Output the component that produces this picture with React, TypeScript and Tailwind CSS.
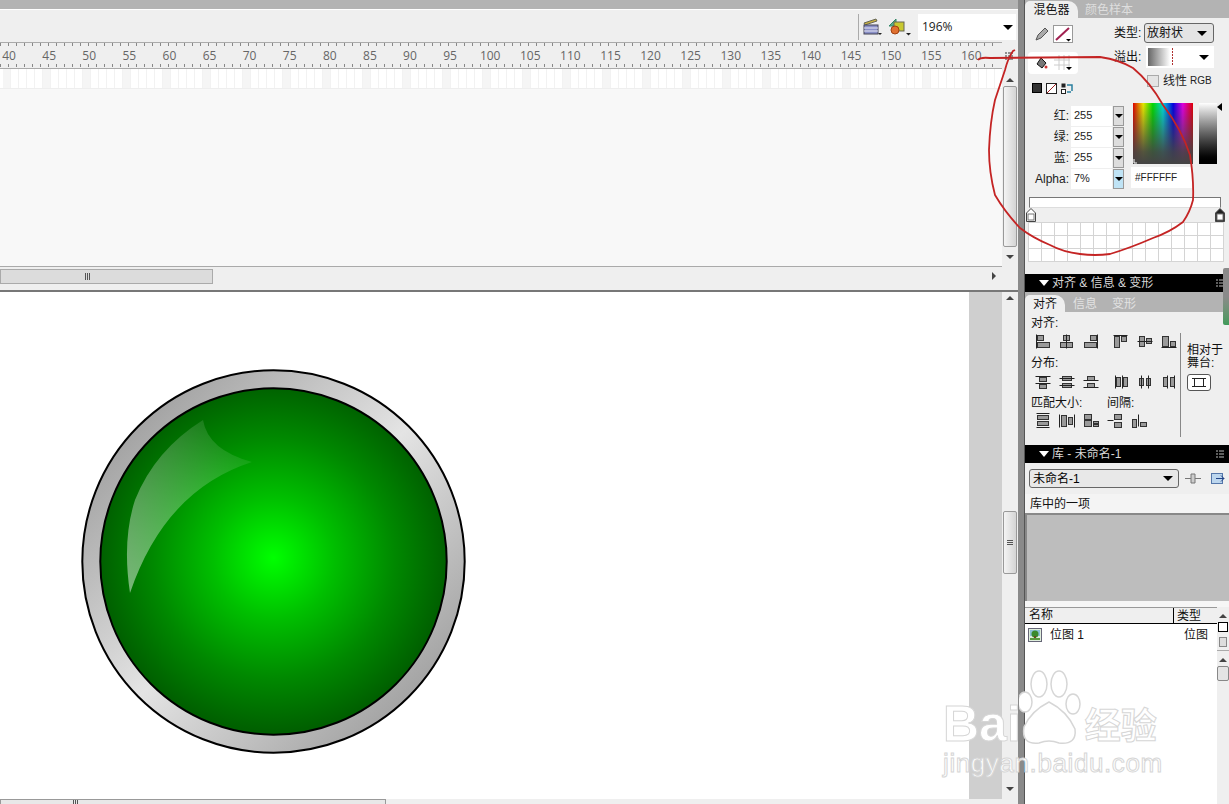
const frameLabels = Array.from({ length: 25 }, (_, i) => 40 + i * 5);
const ticks = Array.from({ length: 125 }, (_, i) => i);

type Glyph = { l?: number[][]; r?: number[][] };

const alignRow1: Glyph[] = [
  { l: [[1, 0, 1, 14]], r: [[2, 1, 6, 5], [2, 8, 12, 5]] },
  { l: [[7, 0, 7, 14]], r: [[4, 1, 6, 5], [1, 8, 12, 5]] },
  { l: [[14, 0, 14, 14]], r: [[7, 1, 6, 5], [1, 8, 12, 5]] },
  { l: [[0, 1, 14, 1]], r: [[1, 2, 5, 11], [8, 2, 5, 5]] },
  { l: [[0, 7, 15, 7]], r: [[2, 2, 5, 10], [9, 4, 5, 5]] },
  { l: [[0, 13, 15, 13]], r: [[1, 2, 6, 10], [9, 7, 5, 5]] },
];
const alignRow2: Glyph[] = [
  { l: [[0, 2, 15, 2], [0, 9, 15, 9]], r: [[4, 3, 7, 4], [4, 10, 7, 4]] },
  { l: [[0, 4, 15, 4], [0, 11, 15, 11]], r: [[3, 2, 9, 4], [3, 9, 9, 4]] },
  { l: [[0, 6, 15, 6], [0, 13, 15, 13]], r: [[4, 2, 7, 4], [4, 9, 7, 4]] },
  { l: [[2, 1, 2, 14], [9, 1, 9, 14]], r: [[3, 3, 4, 9], [10, 3, 4, 9]] },
  { l: [[4, 1, 4, 14], [11, 1, 11, 14]], r: [[2, 4, 4, 7], [9, 4, 4, 7]] },
  { l: [[6, 1, 6, 14], [13, 1, 13, 14]], r: [[2, 3, 4, 9], [9, 3, 4, 9]] },
];
const alignRow3: Glyph[] = [
  { l: [[1, 0, 14, 0], [1, 14, 14, 14]], r: [[2, 2, 11, 4], [2, 8, 11, 4]] },
  { l: [[0, 1, 0, 14], [15, 1, 15, 14]], r: [[2, 2, 5, 11], [9, 4, 4, 7]] },
  { r: [[1, 1, 7, 5], [1, 7, 7, 6], [10, 8, 5, 2], [10, 11, 5, 2]] },
  { l: [[0, 7, 6, 7]], r: [[7, 1, 7, 5], [7, 9, 7, 5]] },
  { l: [[7, 1, 7, 13]], r: [[1, 6, 4, 8], [9, 9, 6, 4]] },
];

const AlignIcon = ({ glyph }: { glyph: Glyph }) => {
  return (
    <svg width="16" height="15" viewBox="0 0 16 15" className="shrink-0">
      {glyph.r?.map((r, i) => (
        <rect key={i} x={r[0] + 0.5} y={r[1] + 0.5} width={r[2]} height={r[3]} fill="#9a9a9a" stroke="#333" />
      ))}
      {glyph.l?.map((l, i) => (
        <line key={i} x1={l[0] + 0.5} y1={l[1] + 0.5} x2={l[2] + 0.5} y2={l[3] + 0.5} stroke="#222" />
      ))}
    </svg>
  );
};

const Caret = ({ className = "" }: { className?: string }) => {
  return <div className={`h-0 w-0 border-x-[5px] border-t-[5px] border-x-transparent border-t-black ${className}`} />;
};

const ArrowUp = () => {
  return <div className="h-0 w-0 border-x-[4px] border-b-[4px] border-x-transparent border-b-[#444]" />;
};

const ArrowDown = () => {
  return <div className="h-0 w-0 border-x-[4px] border-t-[4px] border-x-transparent border-t-[#444]" />;
};

const Grip = () => {
  return (
    <div className="flex h-[7px] gap-[1px]">
      <div className="w-px bg-[#555]" />
      <div className="w-px bg-[#555]" />
      <div className="w-px bg-[#555]" />
    </div>
  );
};

const GradientStop = ({ fill }: { fill: string }) => {
  return (
    <svg width="10" height="14" viewBox="0 0 10 14">
      <path d="M5 .5L9.500 5v8.500H.5V5z" fill={fill} stroke="#444" />
      <rect x="2" y="6" width="6" height="6" fill="#fff" stroke="#777" />
    </svg>
  );
};

const PanelTitle = ({ title }: { title: string }) => {
  return (
    <div className="flex h-[18px] shrink-0 items-center bg-black pl-[14px] pr-1 text-[12px] leading-none text-[#d8d8d8]">
      <div className="h-0 w-0 border-x-[5px] border-t-[6px] border-x-transparent border-t-white" />
      <span className="ml-[3px]">{title}</span>
      <svg width="10" height="10" viewBox="0 0 10 10" className="ml-auto">
        <path d="M1 2h2M1 5h2M1 8h2M4 2h5M4 5h5M4 8h5" stroke="#bbb" />
      </svg>
    </div>
  );
};

const ColorField = ({ label, value, active }: { label: string; value: string; active?: boolean }) => {
  return (
    <div className="flex h-[21px] w-[99px] items-center">
      <span className="w-[46px] shrink-0 pr-[2px] text-right text-[12px] text-[#222]">{label}</span>
      <div className="flex h-[20px] w-[41px] shrink-0 items-center bg-white pl-[3px] text-[11px] text-[#222]">{value}</div>
      <div className={`ml-[1px] flex h-[20px] w-[11px] shrink-0 items-center justify-center border border-[#999] ${active ? "bg-[#bfe3f5]" : "bg-[#ddd]"}`}>
        <div className="h-0 w-0 border-x-[4px] border-t-[4px] border-x-transparent border-t-black" />
      </div>
    </div>
  );
};

const MixerPanel = () => {
  return (
    <div className="h-[274px] shrink-0 bg-[#efefef]">
      <div className="flex h-[18px] items-end bg-[#b3b3b3] text-[12px] leading-none">
        <div className="flex h-[17px] w-[53px] items-center justify-center rounded-tl-[5px] rounded-tr-[10px] bg-[#efefef] text-[#111]">混色器</div>
        <span className="mb-[2px] ml-[7px] text-[#dedede]">颜色样本</span>
      </div>
      <div className="flex">
        <div className="w-[81px] shrink-0">
          <div className="ml-[10px] mt-[7px] flex items-center gap-[4px]">
            <svg width="14" height="14" viewBox="0 0 14 14">
              <path d="M1 13l2-5 7-7 3 3-7 7z" fill="#aaa" stroke="#555" />
            </svg>
            <svg width="20" height="18" viewBox="0 0 20 18">
              <rect x="0.5" y="0.5" width="19" height="17" fill="#fff" stroke="#999" />
              <path d="M3 15L16 3" stroke="#a02050" strokeWidth="2" />
              <path d="M13 14h5l-2.500 2.500z" fill="#000" />
            </svg>
          </div>
          <div className="ml-[3px] mt-[9px] flex h-[22px] w-[50px] items-center rounded-[4px] bg-white pl-[8px]">
            <svg width="12" height="13" viewBox="0 0 12 13">
              <path d="M5 1l5 5-4 5-5-4z" fill="#777" stroke="#111" />
              <circle cx="10" cy="10" r="1.500" fill="#c33" />
            </svg>
            <svg width="20" height="16" viewBox="0 0 20 16" className="ml-[6px]">
              <path d="M0 5h16M0 10h16M5 0v15M10 0v15M15 0v15" stroke="#ccc" />
              <path d="M12 12h6l-3 3z" fill="#000" />
            </svg>
          </div>
          <div className="ml-[7px] mt-[9px] flex gap-[4px]">
            <div className="h-[10px] w-[10px] border border-black bg-[#333]" />
            <svg width="11" height="11" viewBox="0 0 11 11">
              <rect x="0.5" y="0.5" width="10" height="10" fill="#fff" stroke="#222" />
              <path d="M1 10L10 1" stroke="#a02020" />
            </svg>
            <svg width="12" height="11" viewBox="0 0 12 11">
              <rect x="0.5" y="0.5" width="4" height="4" fill="#222" />
              <rect x="0.5" y="6.500" width="4" height="4" fill="#fff" stroke="#222" />
              <path d="M6 2h5v6M6 9h4" fill="none" stroke="#2a7f9f" strokeWidth="1.500" />
            </svg>
          </div>
          <div className="mt-[11px]">
            <ColorField label="红:" value="255" />
            <ColorField label="绿:" value="255" />
            <ColorField label="蓝:" value="255" />
            <ColorField label="Alpha:" value="7%" active />
          </div>
        </div>
        <div className="w-[123px]">
          <div className="ml-[8px] mt-[5px] flex items-center text-[12px] leading-none">
            <span className="w-[30px] shrink-0 text-[#111]">类型:</span>
            <div className="flex h-[20px] w-[70px] items-center justify-between rounded-[3px] border border-[#666] bg-[#e4e4e4] pl-[2px] pr-[6px] text-[#111]">
              放射状
              <Caret />
            </div>
          </div>
          <div className="ml-[8px] mt-[3px] flex items-center text-[12px] leading-none">
            <span className="w-[32px] shrink-0 text-[#111]">溢出:</span>
            <div className="flex h-[22px] w-[68px] items-center justify-between bg-white pl-[2px] pr-[5px]">
              <svg width="26" height="18" viewBox="0 0 26 18">
                <defs>
                  <linearGradient id="overflowGrad">
                    <stop offset="0" stopColor="#666" />
                    <stop offset="1" stopColor="#fff" />
                  </linearGradient>
                </defs>
                <rect width="22" height="18" fill="url(#overflowGrad)" />
                <path d="M24.500 0v18" stroke="#b03030" strokeDasharray="2 1" />
              </svg>
              <Caret />
            </div>
          </div>
          <div className="ml-[41px] mt-[7px] flex items-center text-[12px] leading-none text-[#222]">
            <div className="h-[12px] w-[12px] border border-[#aaa] bg-[#e4e4e4]" />
            <span className="ml-[4px]">线性</span>
            <span className="ml-[3px] text-[10px]">RGB</span>
          </div>
          <div className="ml-[27px] mt-[16px] flex items-start">
            <svg width="60" height="61" viewBox="0 0 60 61" className="shrink-0">
              <defs>
                <linearGradient id="hue">
                  <stop offset="0" stopColor="#e00000" />
                  <stop offset="0.17" stopColor="#e8e800" />
                  <stop offset="0.33" stopColor="#00d800" />
                  <stop offset="0.5" stopColor="#00d8d8" />
                  <stop offset="0.67" stopColor="#0000e0" />
                  <stop offset="0.83" stopColor="#e000e0" />
                  <stop offset="1" stopColor="#e00000" />
                </linearGradient>
                <linearGradient id="hueShade" x1="0" y1="0" x2="0" y2="1">
                  <stop offset="0" stopColor="#444" stopOpacity="0" />
                  <stop offset="0.8" stopColor="#444" stopOpacity="0.9" />
                  <stop offset="1" stopColor="#444" stopOpacity="1" />
                </linearGradient>
              </defs>
              <rect width="60" height="61" fill="url(#hue)" />
              <rect width="60" height="61" fill="url(#hueShade)" />
              <path d="M1 60v-4M1 60h3" stroke="#fff" />
            </svg>
            <div className="ml-[6px] h-[61px] w-[18px] shrink-0 bg-linear-to-b from-white to-black" />
            <div className="h-0 w-0 shrink-0 border-y-[4px] border-r-[5px] border-y-transparent border-r-black" />
          </div>
          <div className="ml-[25px] mt-[3px] flex h-[21px] w-[61px] items-center bg-white pl-[4px] text-[10px] text-[#222]">#FFFFFF</div>
        </div>
      </div>
      <div className="ml-[4px] mt-[8px] h-[11px] w-[192px] border border-[#777] border-b-[#ddd] bg-white" />
      <div className="ml-[1px] flex w-[199px] justify-between">
        <GradientStop fill="#fff" />
        <GradientStop fill="#222" />
      </div>
      <div className="ml-[3px] h-[40px] w-[196px] bg-white bg-[linear-gradient(#d4d4d4_1px,transparent_1px),linear-gradient(90deg,#d4d4d4_1px,transparent_1px)] bg-[size:13px_13px]" />
    </div>
  );
};

const AlignPanel = () => {
  return (
    <div className="h-[171px] shrink-0">
      <PanelTitle title="对齐 & 信息 & 变形" />
      <div className="flex h-[20px] items-end bg-[#b3b3b3] text-[12px] leading-none">
        <div className="flex h-[17px] w-[40px] items-center justify-center rounded-tl-[5px] rounded-tr-[10px] bg-[#efefef] text-[#111]">对齐</div>
        <span className="mb-[2px] ml-[8px] text-[#e2e2e2]">信息</span>
        <span className="mb-[2px] ml-[15px] text-[#e2e2e2]">变形</span>
      </div>
      <div className="flex h-[133px] bg-[#efefef] text-[12px] leading-none text-[#111]">
        <div className="w-[155px] shrink-0 pl-[6px] pt-[5px]">
          <div>对齐:</div>
          <div className="ml-[4px] mt-[5px] flex gap-[8px]">
            {alignRow1.map((g, i) => (
              <div key={i} className={i === 3 ? "ml-[6px]" : ""}>
                <AlignIcon glyph={g} />
              </div>
            ))}
          </div>
          <div className="mt-[8px]">分布:</div>
          <div className="ml-[4px] mt-[5px] flex gap-[8px]">
            {alignRow2.map((g, i) => (
              <div key={i} className={i === 3 ? "ml-[6px]" : ""}>
                <AlignIcon glyph={g} />
              </div>
            ))}
          </div>
          <div className="mt-[8px] flex">
            <span className="w-[76px]">匹配大小:</span>
            <span>间隔:</span>
          </div>
          <div className="ml-[4px] mt-[4px] flex gap-[8px]">
            {alignRow3.map((g, i) => (
              <AlignIcon key={i} glyph={g} />
            ))}
          </div>
        </div>
        <div className="mt-[21px] h-[104px] w-px bg-[#888]" />
        <div className="pl-[6px] pt-[32px] leading-[13px]">
          <div>相对于</div>
          <div>舞台:</div>
          <div className="mt-[4px] flex h-[17px] w-[24px] items-center justify-center rounded-[3px] border border-[#555] bg-white">
            <svg width="14" height="11" viewBox="0 0 14 11">
              <rect x="2.500" y="1.500" width="9" height="8" fill="none" stroke="#222" />
              <path d="M0 1.500h4M10 1.500h4M0 9.500h4M10 9.500h4" stroke="#222" />
            </svg>
          </div>
        </div>
      </div>
    </div>
  );
};

const LibraryPanel = () => {
  return (
    <div className="flex flex-1 flex-col overflow-hidden">
      <PanelTitle title="库 - 未命名-1" />
      <div className="flex h-[31px] shrink-0 items-center bg-[#efefef] pl-[4px] text-[12px] leading-none">
        <div className="flex h-[19px] w-[150px] items-center justify-between rounded-[3px] border border-[#666] bg-[#e8e8e8] pl-[3px] pr-[5px]">
          未命名-1
          <Caret />
        </div>
        <svg width="16" height="13" viewBox="0 0 16 13" className="ml-[6px]">
          <path d="M0 6.500h6M10 6.500h6M6 2h4v9H6z" fill="#ccc" stroke="#777" />
        </svg>
        <svg width="15" height="13" viewBox="0 0 15 13" className="ml-[10px]">
          <rect x="0.500" y="1.500" width="11" height="10" fill="#bcd6ee" stroke="#5577aa" />
          <path d="M5 6.500h8M10 3.500l3 3-3 3" fill="none" stroke="#224488" />
        </svg>
      </div>
      <div className="flex h-[19px] shrink-0 items-center bg-[#f4f4f4] pl-[5px] text-[12px] leading-none text-[#111]">库中的一项</div>
      <div className="h-[88px] shrink-0 border-l-2 border-t-2 border-[#888] bg-[#bdbdbd]" />
      <div className="h-[6px] shrink-0 bg-[#f6f6f6]" />
      <div className="flex flex-1">
        <div className="w-[192px] shrink-0 bg-white text-[12px] leading-none text-[#111]">
          <div className="flex h-[17px] items-center border-b border-t border-b-black border-t-[#999] bg-[#efefef]">
            <span className="w-[149px] border-r border-black pl-[4px] leading-[15px]">名称</span>
            <span className="pl-[3px]">类型</span>
          </div>
          <div className="mt-[3px] flex h-[16px] items-center pl-[3px]">
            <svg width="14" height="14" viewBox="0 0 14 14">
              <rect x="0.500" y="0.500" width="13" height="13" fill="#dfeedd" stroke="#667" />
              <rect x="2" y="2" width="10" height="6" fill="#8cc0d8" />
              <circle cx="7" cy="6" r="3.500" fill="#3b8a2e" />
              <rect x="6" y="8" width="2" height="3" fill="#6b4a20" />
              <rect x="2" y="10" width="10" height="2" fill="#5a9a40" />
            </svg>
            <span className="ml-[8px]">位图 1</span>
            <span className="ml-auto pr-[9px]">位图</span>
          </div>
        </div>
        <div className="flex flex-1 flex-col items-center bg-[#efefef]">
          <div className="mt-[7px]">
            <ArrowUp />
          </div>
          <div className="mt-[4px] h-[10px] w-[10px] border border-black bg-white" />
          <div className="mt-[5px] h-[10px] w-[8px] border border-[#888] bg-[#ddd]" />
          <div className="mt-[3px] h-px w-full bg-[#aaa]" />
          <div className="mt-[7px]">
            <ArrowUp />
          </div>
          <div className="mt-[4px] h-[15px] w-full rounded-[2px] border border-[#888] bg-[#e4e4e4]" />
        </div>
      </div>
    </div>
  );
};

const Ruler = () => {
  return (
    <div className="h-[27px] shrink-0 overflow-hidden border-y border-[#aaa] bg-[#efefef]">
      <div className="flex h-[4px]">
        {ticks.map((t) => (
          <div key={t} className="h-[3px] w-[8px] shrink-0 border-l border-[#888]" />
        ))}
      </div>
      <div className="-ml-[11px] flex h-[17px] items-center">
        {frameLabels.map((n) => (
          <div key={n} className="w-[40.1px] shrink-0 text-center text-[12px] leading-none text-[#666]">
            {n}
          </div>
        ))}
      </div>
      <div className="flex h-[4px]">
        {ticks.map((t) => (
          <div key={t} className="h-[3px] w-[8px] shrink-0 border-l border-[#888]" />
        ))}
      </div>
    </div>
  );
};

const Timeline = () => {
  return (
    <div className="flex h-[290px] shrink-0 flex-col bg-[#efefef]">
      <div className="h-[10px] shrink-0 border-b border-white bg-[#b3b3b3]" />
      <div className="flex h-[32px] shrink-0 items-center justify-end pr-[2px] pt-[2px]">
        <div className="h-[26px] w-px bg-[#aaa]" />
        <svg width="19" height="18" viewBox="0 0 19 18" className="ml-[4px]">
          <path d="M1 5L13 1l1 2L2 7z" fill="#c8b040" stroke="#665" />
          <rect x="1" y="7" width="14" height="9" fill="#8a90c8" stroke="#445" />
          <path d="M1 10h14M1 13h14" stroke="#e8e8f4" />
          <path d="M15 15h4l-2 2z" fill="#222" />
        </svg>
        <svg width="24" height="18" viewBox="0 0 24 18" className="ml-[6px]">
          <path d="M1 8L8 1v7z" fill="#58b090" stroke="#386" />
          <rect x="6" y="4" width="10" height="9" fill="#c8c830" stroke="#665" />
          <circle cx="7" cy="12" r="4" fill="#e07030" stroke="#a04010" />
          <path d="M18 15h5l-2.500 2.500z" fill="#222" />
        </svg>
        <div className="ml-[6px] flex h-[26px] w-[98px] items-center justify-between bg-white pl-[4px] pr-[3px] text-[12px] text-[#222]">
          196%
          <Caret />
        </div>
      </div>
      <div className="flex flex-1">
        <div className="flex w-[1002px] shrink-0 flex-col overflow-hidden pb-[5px]">
          <Ruler />
          <div className="flex h-[20px] shrink-0 border-b border-[#eee] bg-white pl-[3px]">
            {ticks.map((t) => (
              <div key={t} className={`h-full w-[8px] shrink-0 border-r border-[#f2f2f2] ${t % 5 === 0 ? "bg-[#f5f5f5]" : "bg-white"}`} />
            ))}
          </div>
          <div className="flex-1 border-b border-[#aaa] bg-[#f8f8f8]" />
          <div className="flex h-[18px] shrink-0 items-center bg-[#efefef]">
            <div className="flex h-[15px] w-[213px] items-center border border-[#aaa] bg-[#dcdcdc] pl-[84px]">
              <Grip />
            </div>
            <div className="ml-auto mr-[6px] h-0 w-0 border-y-[4px] border-l-[4px] border-y-transparent border-l-[#444]" />
          </div>
        </div>
        <div className="flex flex-1 flex-col items-center">
          <svg width="12" height="10" viewBox="0 0 12 10" className="mt-[9px]">
            <path d="M1 2h2M1 5h2M1 8h2M4 2h5M4 5h5M4 8h5" stroke="#333" />
          </svg>
          <div className="mt-[17px]">
            <ArrowUp />
          </div>
          <div className="mt-[4px] h-[161px] w-[14px] rounded-[2px] border border-[#999] bg-linear-to-r from-[#f4f4f4] to-[#d4d4d4]" />
          <div className="mt-[8px]">
            <ArrowDown />
          </div>
        </div>
      </div>
    </div>
  );
};

const Stage = () => {
  return (
    <div className="flex flex-1 flex-col border-t-2 border-[#777] bg-white">
      <div className="flex flex-1">
        <div className="w-[969px] shrink-0 pl-[81px] pt-[77px]">
          <svg width="386" height="386" viewBox="0 0 386 386">
            <defs>
              <linearGradient id="ringGrad" x1="0.1" y1="0.1" x2="0.9" y2="0.9">
                <stop offset="0" stopColor="#9c9c9c" />
                <stop offset="0.5" stopColor="#e4e4e4" />
                <stop offset="1" stopColor="#9c9c9c" />
              </linearGradient>
              <radialGradient id="greenGrad" cx="0.5" cy="0.49" r="0.5">
                <stop offset="0" stopColor="#00ff00" />
                <stop offset="0.35" stopColor="#00bf00" />
                <stop offset="0.7" stopColor="#008800" />
                <stop offset="1" stopColor="#006000" />
              </radialGradient>
              <linearGradient id="shineGrad" x1="0" y1="1" x2="1" y2="0">
                <stop offset="0" stopColor="#fff" stopOpacity="0.48" />
                <stop offset="1" stopColor="#fff" stopOpacity="0.02" />
              </linearGradient>
            </defs>
            <circle cx="192.500" cy="192.500" r="191.200" fill="url(#ringGrad)" stroke="#000" strokeWidth="2" />
            <circle cx="192.500" cy="192.500" r="173.200" fill="url(#greenGrad)" stroke="#000" strokeWidth="2" />
            <path d="M122 51Q127 81 171 93Q84 121 49 224Q41 171 54 131Q74 81 122 51Z" fill="url(#shineGrad)" />
          </svg>
        </div>
        <div className="w-[33px] shrink-0 bg-[#cfcfcf]" />
        <div className="flex flex-1 flex-col items-center bg-[#efefef]">
          <div className="mt-[4px]">
            <ArrowUp />
          </div>
          <div className="mt-[211px] flex h-[63px] w-[14px] flex-col items-center justify-center gap-[1px] rounded-[2px] border border-[#999] bg-linear-to-r from-[#f4f4f4] to-[#d4d4d4]">
            <div className="h-px w-[6px] bg-[#555]" />
            <div className="h-px w-[6px] bg-[#555]" />
            <div className="h-px w-[6px] bg-[#555]" />
          </div>
          <div className="mt-[213px]">
            <ArrowDown />
          </div>
        </div>
      </div>
      <div className="flex h-[5px] shrink-0 bg-[#efefef]">
        <div className="h-[6px] w-[386px] border border-[#999] bg-[#e8e8e8] pl-[72px]">
          <Grip />
        </div>
      </div>
    </div>
  );
};

const Annotation = () => {
  return (
    <svg width="1229" height="804" viewBox="0 0 1229 804" className="pointer-events-none absolute left-0 top-0">
      <path
        d="M978 60Q980 57 990 58L1100 57Q1120 60 1133 68Q1150 82 1163 105Q1182 130 1190 155Q1194 180 1193 200Q1190 212 1183 222Q1170 232 1153 238Q1130 248 1110 254Q1095 256 1080 254Q1063 252 1050 245Q1033 238 1020 228Q1005 212 995 195Q989 172 989 150Q990 122 995 100Q1000 85 1005 70Q1008 58 1013 51L1015 50"
        fill="none"
        stroke="#c42424"
        strokeWidth="1.800"
      />
    </svg>
  );
};

const Watermark = () => {
  return (
    <div className="pointer-events-none absolute bottom-[28px] right-[66px] flex w-[220px] flex-col font-['Liberation_Sans',sans-serif] text-white [-webkit-text-stroke:1px_#d6d6d6]">
      <div className="flex h-[78px] items-end">
        <span className="text-[50px] font-bold leading-[46px]">Bai</span>
        <svg width="64" height="78" viewBox="0 0 64 78" className="-ml-[2px] shrink-0">
          <g fill="#fff" stroke="#d6d6d6" strokeWidth="1.500">
            <ellipse cx="20" cy="15" rx="8" ry="13" />
            <ellipse cx="40" cy="15" rx="8" ry="13" />
            <ellipse cx="6" cy="33" rx="7" ry="10" />
            <ellipse cx="54" cy="35" rx="7" ry="10" />
            <path d="M30 33Q48 42 56 60Q58 76 40 74Q30 70 20 74Q2 76 5 58Q12 42 30 33Z" />
          </g>
        </svg>
        <span className="mb-[6px] ml-[2px] font-['Noto_Sans_CJK_SC',sans-serif] text-[36px] font-bold leading-none">经验</span>
      </div>
      <div className="mt-[3px] whitespace-nowrap text-[26px] leading-none tracking-[0.6px]">jingyan.baidu.com</div>
    </div>
  );
};

const App = () => {
  return (
    <div className="relative flex h-[804px] w-[1229px] overflow-hidden bg-white font-['Open_Sans','Noto_Sans_CJK_SC',sans-serif]">
      <div className="flex w-[1018px] shrink-0 flex-col">
        <Timeline />
        <Stage />
      </div>
      <div className="w-[7px] shrink-0 border-r border-[#555] bg-[#8a8a8a]" />
      <div className="flex w-[204px] shrink-0 flex-col bg-[#efefef] font-['Liberation_Sans','Noto_Sans_CJK_SC',sans-serif]">
        <MixerPanel />
        <AlignPanel />
        <LibraryPanel />
      </div>
      <div className="absolute right-0 top-[268px] h-[57px] w-[6px] rounded-l-[2px] bg-linear-to-b from-[#8a8a8a] via-[#8a8a8a] to-[#3f9a5a]" />
      <Annotation />
      <Watermark />
    </div>
  );
};

export default App;
